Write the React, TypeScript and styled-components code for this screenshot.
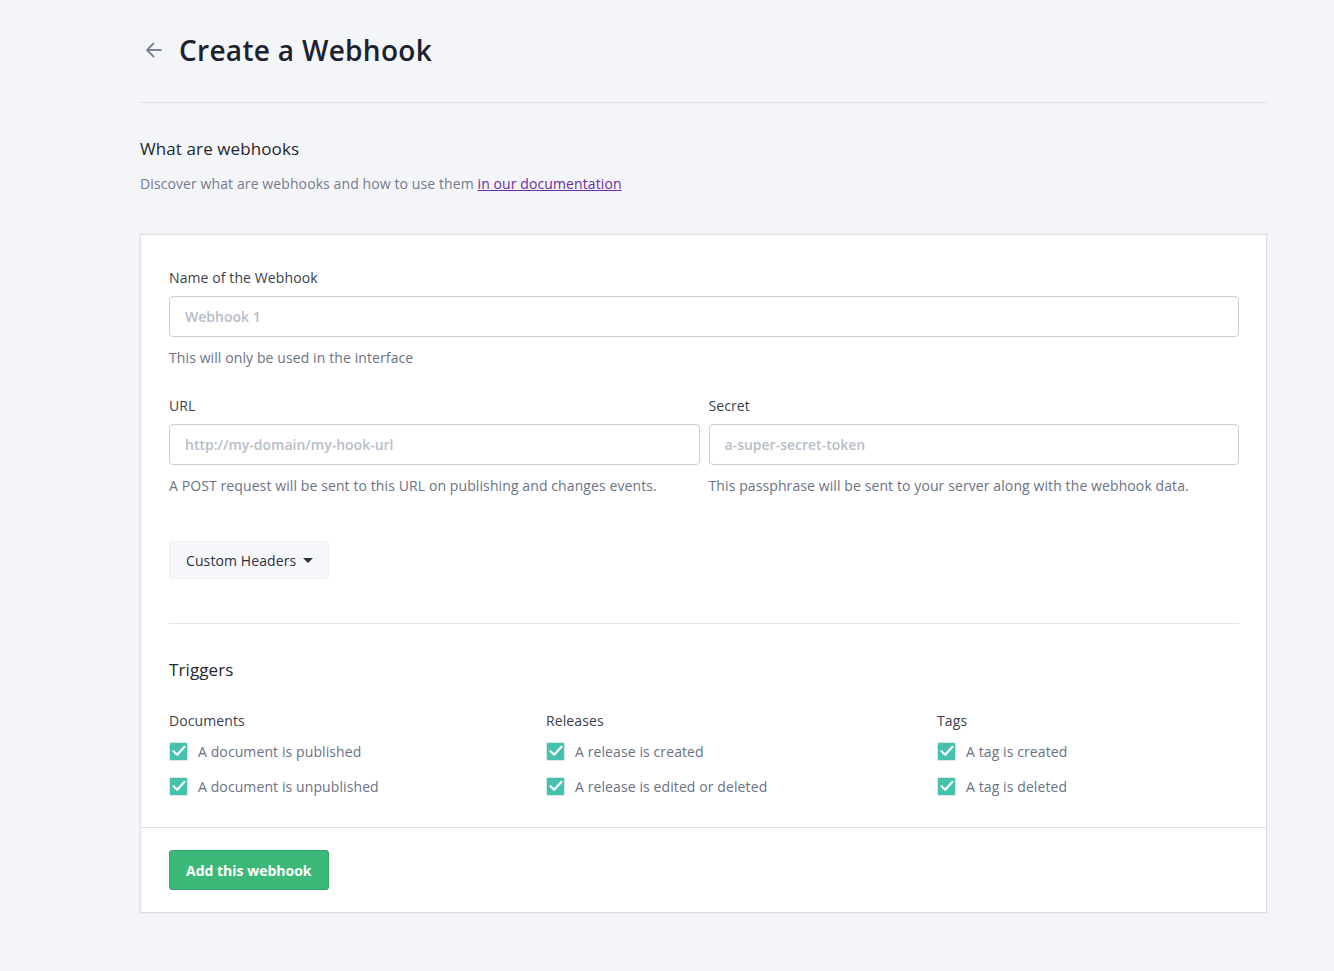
import React from "react";
import styled, { createGlobalStyle } from "styled-components";

const Global = createGlobalStyle`
  html, body { margin: 0; padding: 0; background: #f4f5f9; }
  body { font-family: "Open Sans", "Noto Sans", sans-serif; color: #25272d; letter-spacing: 0.1px; }
  * { box-sizing: border-box; }
`;

const Page = styled.div`
  padding: 27px 67px 58px 140px;
`;

const Header = styled.header`
  display: flex;
  align-items: center;
  gap: 15px;
  height: 46px;
  padding-left: 4px;
  padding-bottom: 29px;
  box-sizing: content-box;
  border-bottom: 1px solid #dfe1e6;
`;

const BackIcon = styled.svg`
  width: 20px;
  height: 20px;
  color: #7b8599;
`;

const Title = styled.h1`
  margin: 0;
  font-size: 28px;
  font-weight: 600;
  color: #1d2230;
  letter-spacing: 0.3px;
`;

const Intro = styled.section`
  padding: 34px 0 40px;
`;

const SectionTitle = styled.h2`
  margin: 0 0 13px;
  font-size: 17px;
  font-weight: 400;
  color: #25272d;
  line-height: 24px;
`;

const Muted = styled.p`
  margin: 0;
  font-size: 14px;
  line-height: 20px;
  color: #737b8c;
`;

const DocLink = styled.a`
  color: #6a2ea0;
  text-decoration: underline;
`;

const Card = styled.div`
  background: #fff;
  border: 1px solid #dcdfe6;
  box-shadow: 0 0 0 1px #eceef2;
`;

const CardBody = styled.div`
  padding: 33px 27px 16px 28px;
`;

const Field = styled.div`
  display: flex;
  flex-direction: column;
  min-width: 0;
`;

const Label = styled.label`
  font-size: 14px;
  line-height: 20px;
  color: #3a3f4b;
  margin-bottom: 8px;
`;

const Input = styled.input`
  height: 41px;
  width: 100%;
  border: 1px solid #c9ced8;
  border-radius: 4px;
  padding: 0 15px;
  font-family: inherit;
  font-size: 14px;
  font-weight: 600;
  color: #25272d;
  background: #fff;
  outline: none;
  &::placeholder { color: #b7bdc8; }
`;

const Help = styled.div`
  margin-top: 11px;
  font-size: 14px;
  line-height: 20px;
  color: #6a7284;
`;

const Row = styled.div`
  display: grid;
  grid-template-columns: 1fr 1fr;
  gap: 9px;
  margin-top: 28px;
`;

const DropButton = styled.button`
  margin-top: 45px;
  display: inline-flex;
  align-items: center;
  gap: 7px;
  height: 38px;
  padding: 0 15px 0 16px;
  background: #f6f7fa;
  border: 1px solid #f0f1f4;
  border-radius: 3px;
  font-family: inherit;
  font-size: 14px;
  letter-spacing: 0.1px;
  color: #2c303a;
`;

const Caret = styled.span`
  width: 0;
  height: 0;
  border-left: 5px solid transparent;
  border-right: 5px solid transparent;
  border-top: 5px solid #2c303a;
`;

const Divider = styled.hr`
  border: none;
  border-top: 1px solid #e1e3e8;
  margin: 44px 0 34px;
`;

const TriggerTitle = styled.h3`
  margin: 0 0 29px;
  font-size: 17px;
  font-weight: 400;
  line-height: 24px;
  color: #25272d;
`;

const Columns = styled.div`
  display: grid;
  grid-template-columns: 377px 391px 1fr;
`;

const Group = styled.div`
  display: flex;
  flex-direction: column;
`;

const GroupLabel = styled.div`
  font-size: 14px;
  line-height: 20px;
  color: #3a3f4b;
  margin-bottom: 10px;
`;

const Check = styled.label`
  display: flex;
  align-items: center;
  gap: 10px;
  height: 20px;
  margin-bottom: 15px;
  font-size: 14px;
  color: #6a7284;
`;

const Box = styled.span`
  width: 19px;
  height: 19px;
  border-radius: 2px;
  background: #46c1ae;
  border: 1px solid #d6e9e6;
  display: inline-flex;
  align-items: center;
  justify-content: center;
`;

const Footer = styled.div`
  border-top: 1px solid #dfe1e6;
  padding: 22px 28px 22px;
`;

const Submit = styled.button`
  height: 40px;
  padding: 0 16px;
  background: #3cb878;
  border: 1px solid #34a86b;
  border-radius: 3px;
  color: #fff;
  font-family: inherit;
  font-size: 14px;
  font-weight: 700;
  letter-spacing: 0;
`;

const CheckItem = ({ text }: { text: string }) => (
  <Check>
    <Box>
      <svg width="14" height="12" viewBox="0 0 14 12" fill="none">
        <path d="M1.5 6.2 L5.2 9.8 L12.5 1.8" stroke="#fff" strokeWidth="2.2" strokeLinecap="round" strokeLinejoin="round" />
      </svg>
    </Box>
    {text}
  </Check>
);

const groups = [
  { name: "Documents", items: ["A document is published", "A document is unpublished"] },
  { name: "Releases", items: ["A release is created", "A release is edited or deleted"] },
  { name: "Tags", items: ["A tag is created", "A tag is deleted"] },
];

export default function App() {
  return (
    <>
      <Global />
      <Page>
        <Header>
          <BackIcon viewBox="0 0 20 20" fill="none">
            <path d="M17 10 H3.5 M9.5 3.5 L3 10 L9.5 16.5" stroke="currentColor" strokeWidth="1.8" strokeLinecap="round" strokeLinejoin="round" />
          </BackIcon>
          <Title>Create a Webhook</Title>
        </Header>
        <Intro>
          <SectionTitle>What are webhooks</SectionTitle>
          <Muted>
            Discover what are webhooks and how to use them <DocLink href="#">in our documentation</DocLink>
          </Muted>
        </Intro>
        <Card>
          <CardBody>
            <Field>
              <Label>Name of the Webhook</Label>
              <Input placeholder="Webhook 1" />
              <Help>This will only be used in the interface</Help>
            </Field>
            <Row>
              <Field>
                <Label>URL</Label>
                <Input placeholder="http://my-domain/my-hook-url" />
                <Help>A POST request will be sent to this URL on publishing and changes events.</Help>
              </Field>
              <Field>
                <Label>Secret</Label>
                <Input placeholder="a-super-secret-token" />
                <Help>This passphrase will be sent to your server along with the webhook data.</Help>
              </Field>
            </Row>
            <DropButton>
              Custom Headers <Caret />
            </DropButton>
            <Divider />
            <TriggerTitle>Triggers</TriggerTitle>
            <Columns>
              {groups.map((g) => (
                <Group key={g.name}>
                  <GroupLabel>{g.name}</GroupLabel>
                  {g.items.map((t) => (
                    <CheckItem key={t} text={t} />
                  ))}
                </Group>
              ))}
            </Columns>
          </CardBody>
          <Footer>
            <Submit>Add this webhook</Submit>
          </Footer>
        </Card>
      </Page>
    </>
  );
}
